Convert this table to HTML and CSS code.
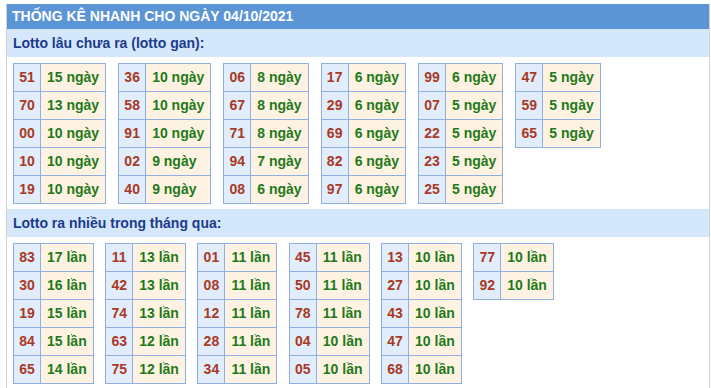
FILE: index.html
```html
<!DOCTYPE html>
<html lang="vi">
<head>
<meta charset="utf-8">
<link rel="stylesheet" href="styles.css">
</head>
<body>
<div class="box">
  <div class="title">THỐNG KÊ NHANH CHO NGÀY 04/10/2021</div>
  <div class="sub">Lotto lâu chưa ra (lotto gan):</div>
  <div class="tables gan">
    <table class="t"><tr><td class="n">51</td><td class="v">15 ngày</td></tr><tr><td class="n">70</td><td class="v">13 ngày</td></tr><tr><td class="n">00</td><td class="v">10 ngày</td></tr><tr><td class="n">10</td><td class="v">10 ngày</td></tr><tr><td class="n">19</td><td class="v">10 ngày</td></tr></table>
    <table class="t"><tr><td class="n">36</td><td class="v">10 ngày</td></tr><tr><td class="n">58</td><td class="v">10 ngày</td></tr><tr><td class="n">91</td><td class="v">10 ngày</td></tr><tr><td class="n">02</td><td class="v">9 ngày</td></tr><tr><td class="n">40</td><td class="v">9 ngày</td></tr></table>
    <table class="t"><tr><td class="n">06</td><td class="v">8 ngày</td></tr><tr><td class="n">67</td><td class="v">8 ngày</td></tr><tr><td class="n">71</td><td class="v">8 ngày</td></tr><tr><td class="n">94</td><td class="v">7 ngày</td></tr><tr><td class="n">08</td><td class="v">6 ngày</td></tr></table>
    <table class="t"><tr><td class="n">17</td><td class="v">6 ngày</td></tr><tr><td class="n">29</td><td class="v">6 ngày</td></tr><tr><td class="n">69</td><td class="v">6 ngày</td></tr><tr><td class="n">82</td><td class="v">6 ngày</td></tr><tr><td class="n">97</td><td class="v">6 ngày</td></tr></table>
    <table class="t"><tr><td class="n">99</td><td class="v">6 ngày</td></tr><tr><td class="n">07</td><td class="v">5 ngày</td></tr><tr><td class="n">22</td><td class="v">5 ngày</td></tr><tr><td class="n">23</td><td class="v">5 ngày</td></tr><tr><td class="n">25</td><td class="v">5 ngày</td></tr></table>
    <table class="t"><tr><td class="n">47</td><td class="v">5 ngày</td></tr><tr><td class="n">59</td><td class="v">5 ngày</td></tr><tr><td class="n">65</td><td class="v">5 ngày</td></tr></table>
  </div>
  <div class="sub">Lotto ra nhiều trong tháng qua:</div>
  <div class="tables">
    <table class="t"><tr><td class="n">83</td><td class="v">17 lần</td></tr><tr><td class="n">30</td><td class="v">16 lần</td></tr><tr><td class="n">19</td><td class="v">15 lần</td></tr><tr><td class="n">84</td><td class="v">15 lần</td></tr><tr><td class="n">65</td><td class="v">14 lần</td></tr></table>
    <table class="t"><tr><td class="n">11</td><td class="v">13 lần</td></tr><tr><td class="n">42</td><td class="v">13 lần</td></tr><tr><td class="n">74</td><td class="v">13 lần</td></tr><tr><td class="n">63</td><td class="v">12 lần</td></tr><tr><td class="n">75</td><td class="v">12 lần</td></tr></table>
    <table class="t"><tr><td class="n">01</td><td class="v">11 lần</td></tr><tr><td class="n">08</td><td class="v">11 lần</td></tr><tr><td class="n">12</td><td class="v">11 lần</td></tr><tr><td class="n">28</td><td class="v">11 lần</td></tr><tr><td class="n">34</td><td class="v">11 lần</td></tr></table>
    <table class="t"><tr><td class="n">45</td><td class="v">11 lần</td></tr><tr><td class="n">50</td><td class="v">11 lần</td></tr><tr><td class="n">78</td><td class="v">11 lần</td></tr><tr><td class="n">04</td><td class="v">10 lần</td></tr><tr><td class="n">05</td><td class="v">10 lần</td></tr></table>
    <table class="t"><tr><td class="n">13</td><td class="v">10 lần</td></tr><tr><td class="n">27</td><td class="v">10 lần</td></tr><tr><td class="n">43</td><td class="v">10 lần</td></tr><tr><td class="n">47</td><td class="v">10 lần</td></tr><tr><td class="n">68</td><td class="v">10 lần</td></tr></table>
    <table class="t"><tr><td class="n">77</td><td class="v">10 lần</td></tr><tr><td class="n">92</td><td class="v">10 lần</td></tr></table>
  </div>
</div>
</body>
</html>
```

FILE: styles.css
```css
html, body {
  margin: 0;
  padding: 0;
  background: #ffffff;
}
body {
  font-family: "Liberation Sans", Arial, sans-serif;
  font-size: 14px;
  font-weight: bold;
}
.box {
  margin: 4px 0 0 6px;
  width: 702px;
  border-left: 1px solid #d2d2d2;
  border-right: 1px solid #d2d2d2;
}
.title {
  background: #5b95d6;
  color: #ffffff;
  height: 25px;
  line-height: 25px;
  padding-left: 5px;
}
.sub {
  background: #d5e7fa;
  color: #1b3b8c;
  height: 28px;
  line-height: 28px;
  padding-left: 6px;
}
.tables {
  display: flex;
  align-items: flex-start;
  gap: 11.5px;
  padding: 6px 0 5px 6px;
}
.tables.gan {
  gap: 12px;
}
.t {
  border-collapse: collapse;
}
.t td {
  border: 1px solid #8eafe0;
  height: 27px;
  padding: 0 6px;
  line-height: 27px;
  white-space: nowrap;
}
.t td.n {
  background: #e2edfc;
  color: #a83a26;
  text-align: center;
  padding: 0 5px;
  width: 16px;
}
.t td.v {
  background: #fef3e2;
  color: #1e7a1a;
}
```
